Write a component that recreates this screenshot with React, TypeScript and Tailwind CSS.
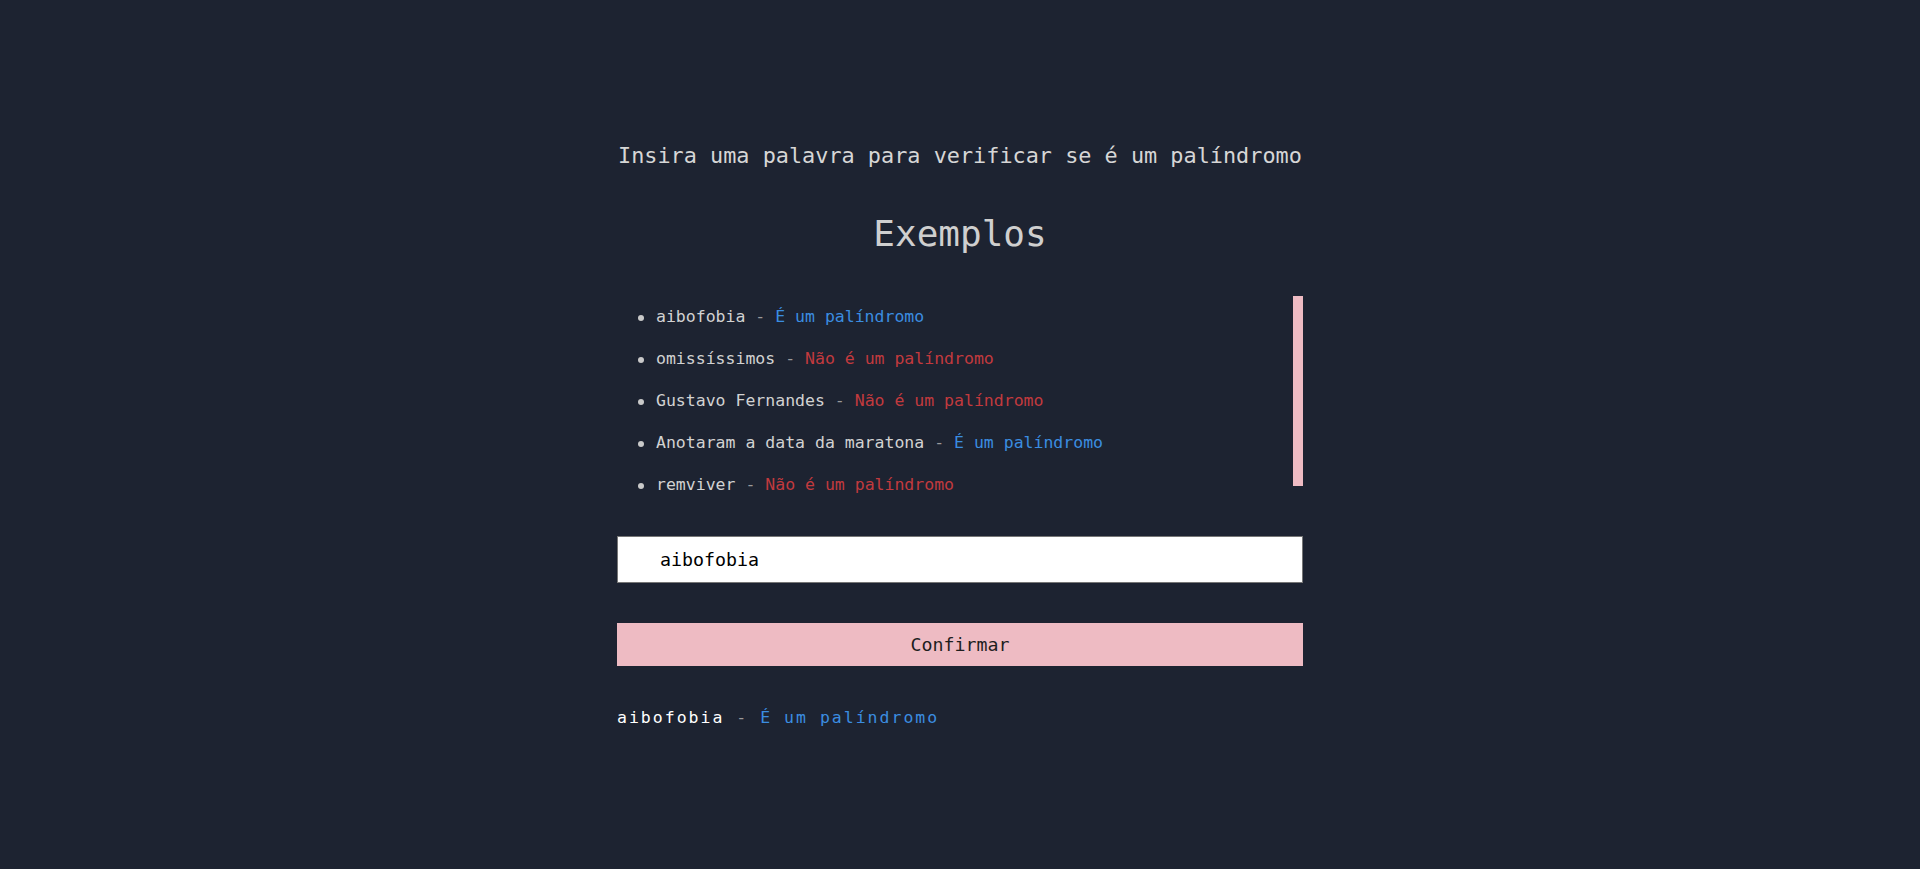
import React from "react";

const items: { word: string; ok: boolean }[] = [
  { word: "aibofobia", ok: true },
  { word: "omissíssimos", ok: false },
  { word: "Gustavo Fernandes", ok: false },
  { word: "Anotaram a data da maratona", ok: true },
  { word: "remviver", ok: false },
];

export default function App() {
  const mono = "font-['DejaVu_Sans_Mono','Liberation_Mono',monospace]";
  return (
    <div className={`min-h-screen w-full bg-[#1d2331] ${mono} flex flex-col items-center`}>
      <div className="w-[686px] pt-[140px] flex flex-col">
        <h2 className="text-[21.85px] leading-[32px] h-[32px] text-left pl-[1px] text-[#d6d6d6] whitespace-nowrap">
          Insira uma palavra para verificar se é um palíndromo
        </h2>
        <h1 className="mt-[38px] text-[36px] leading-[48px] h-[48px] text-center text-[#cfcfcf]">
          Exemplos
        </h1>
        <div className="mt-[38px] h-[210px] flex flex-row overflow-hidden">
          <ul className="flex-1 flex flex-col">
            {items.map((it) => (
              <li
                key={it.word}
                className="h-[42px] shrink-0 flex flex-row items-center pl-[21px] pt-[1px] text-[16.5px] whitespace-nowrap"
              >
                <span className="w-[6px] h-[6px] rounded-full bg-[#c9c9c9]" />
                <span className="ml-[12px] text-[#d2d2d2]">{it.word}</span>
                <span className="text-[#9a9a9a]">&nbsp;-&nbsp;</span>
                <span className={it.ok ? "text-[#3b8de0]" : "text-[#c23a3e]"}>
                  {it.ok ? "É um palíndromo" : "Não é um palíndromo"}
                </span>
              </li>
            ))}
          </ul>
          <div className="w-[10px] h-[190px] bg-[#eebbc3] shrink-0" />
        </div>
        <input
          readOnly
          value="aibofobia"
          className="mt-[30px] h-[47px] w-full bg-white border border-[#767676] pl-[42px] text-[18.3px] text-black outline-none"
        />
        <button className="mt-[40px] h-[43px] w-full bg-[#eebbc3] text-[18.3px] text-[#1e1e1e]">
          Confirmar
        </button>
        <p className="mt-[40px] h-[24px] leading-[24px] text-[16.5px] tracking-[2px] whitespace-nowrap">
          <span className="text-white">aibofobia</span>
          <span className="text-[#9a9a9a]"> - </span>
          <span className="text-[#3b8de0]">É um palíndromo</span>
        </p>
      </div>
    </div>
  );
}
